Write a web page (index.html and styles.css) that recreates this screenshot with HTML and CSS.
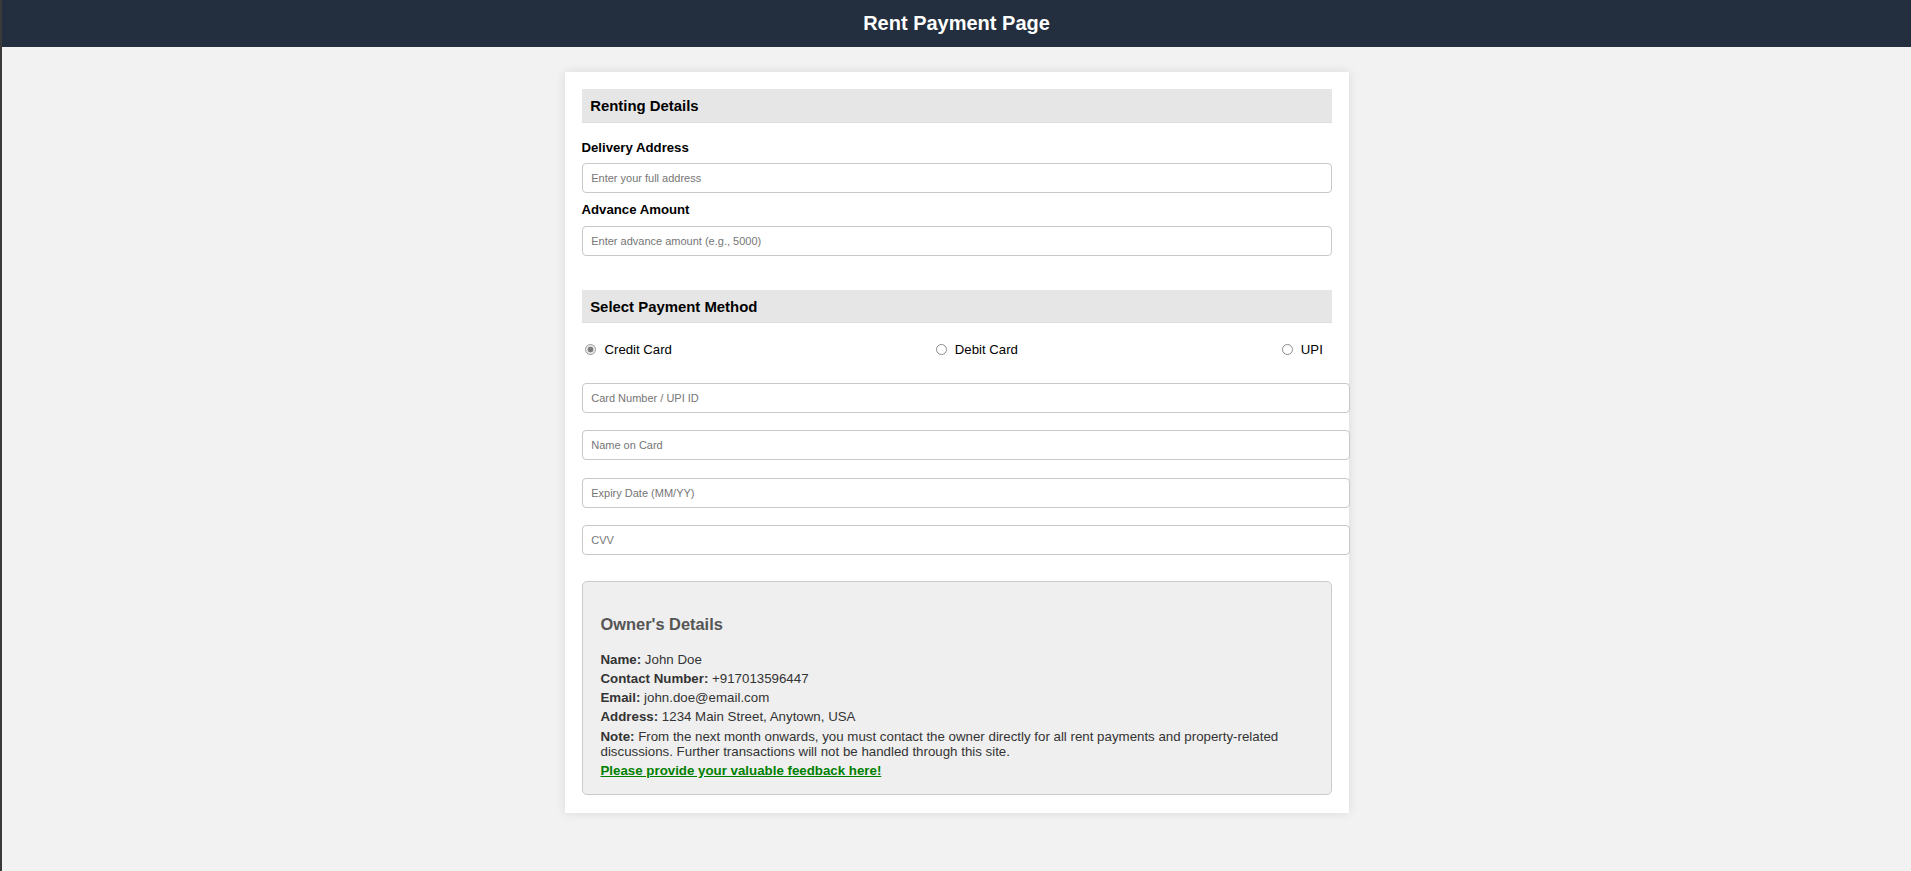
FILE: index.html
```html
<!DOCTYPE html>
<html lang="en">
<head>
<meta charset="utf-8">
<title>Rent Payment Page</title>
<link rel="stylesheet" href="styles.css">
</head>
<body>
<div class="page">
  <header class="topbar">
    <h1 class="topbar-title">Rent Payment Page</h1>
  </header>

  <main class="card">
    <section class="renting">
      <h3 class="section-title">Renting Details</h3>
      <label class="field-label" for="addr">Delivery Address</label>
      <input class="text-input" id="addr" type="text" placeholder="Enter your full address">
      <label class="field-label" for="adv">Advance Amount</label>
      <input class="text-input last" id="adv" type="text" placeholder="Enter advance amount (e.g., 5000)">
    </section>

    <section class="payment">
      <h3 class="section-title">Select Payment Method</h3>
      <div class="radio-row">
        <label class="radio-option"><input class="radio" type="radio" name="pm" checked><span>Credit Card</span></label>
        <label class="radio-option"><input class="radio" type="radio" name="pm"><span>Debit Card</span></label>
        <label class="radio-option"><input class="radio" type="radio" name="pm"><span>UPI</span></label>
      </div>
      <div class="pay-fields">
        <input class="pay-input" type="text" placeholder="Card Number / UPI ID">
        <input class="pay-input" type="text" placeholder="Name on Card">
        <input class="pay-input" type="text" placeholder="Expiry Date (MM/YY)">
        <input class="pay-input" type="text" placeholder="CVV">
      </div>
    </section>

    <section class="owner-box">
      <h3 class="owner-title">Owner's Details</h3>
      <p class="owner-line"><strong>Name:</strong> John Doe</p>
      <p class="owner-line"><strong>Contact Number:</strong> +917013596447</p>
      <p class="owner-line"><strong>Email:</strong> john.doe@email.com</p>
      <p class="owner-line"><strong>Address:</strong> 1234 Main Street, Anytown, USA</p>
      <p class="owner-line owner-note"><strong>Note:</strong> From the next month onwards, you must contact the owner directly for all rent payments and property-related discussions. Further transactions will not be handled through this site.</p>
      <a class="feedback-link" href="#">Please provide your valuable feedback here!</a>
    </section>
  </main>
</div>
</body>
</html>
```

FILE: styles.css
```css
html, body {
  margin: 0;
  padding: 0;
}

body {
  background: #f2f2f2;
  font-family: "Liberation Sans", Arial, sans-serif;
  color: #000;
}

.page {
  min-height: 100vh;
  border-left: 2px solid #3a3a3a;
  box-sizing: border-box;
}

.topbar {
  background: #232f3e;
  padding: 12px 0 12px;
  text-align: center;
}

.topbar-title {
  margin: 0;
  font-size: 20px;
  line-height: 23px;
  font-weight: bold;
  color: #fff;
}

.card {
  display: block;
  width: 784px;
  box-sizing: border-box;
  margin: 25px auto 0;
  padding: 17px 17px 18px;
  background: #fff;
  box-shadow: 0 0 10px rgba(0, 0, 0, 0.1);
}

.section-title {
  margin: 0;
  height: 33.7px;
  box-sizing: border-box;
  display: flex;
  align-items: center;
  padding: 1px 8.7px 0;
  background: #e6e6e6;
  border-bottom: 1px solid #dedede;
  font-size: 14.9px;
  font-weight: bold;
  color: #000;
}

.renting .section-title {
  margin-bottom: 17px;
}

.field-label {
  display: block;
  font-size: 13.2px;
  line-height: 15.2px;
  font-weight: bold;
  margin-bottom: 8.6px;
}

.text-input {
  display: block;
  width: 100%;
  box-sizing: border-box;
  height: 30px;
  padding: 0 8.7px;
  border: 1px solid #c8c8c8;
  border-radius: 4px;
  font-family: "Liberation Sans", Arial, sans-serif;
  font-size: 11px;
  color: #333;
  background: #fff;
  margin: 0 0 8.6px;
}

.text-input.last {
  margin-bottom: 0;
}

.text-input::placeholder,
.pay-input::placeholder {
  color: #767676;
}

.payment {
  margin-top: 33.8px;
}

.radio-row {
  display: flex;
  justify-content: space-between;
  align-items: center;
  margin-top: 18.7px;
  padding-right: 8.7px;
  font-size: 13.2px;
  line-height: 15.2px;
}

.radio-option {
  display: flex;
  align-items: center;
  gap: 8.3px;
}

.radio {
  appearance: none;
  -webkit-appearance: none;
  margin: 0 0 0 3.7px;
  width: 11px;
  height: 11px;
  box-sizing: border-box;
  border: 1px solid #8a8a8a;
  border-radius: 50%;
  background: #fff;
}

.radio:checked {
  border-color: #9a9a9a;
  background: radial-gradient(circle, #7b7b7b 0 2.6px, #e9e9e9 3.2px);
}

.pay-fields {
  display: flex;
  flex-direction: column;
  gap: 17.4px;
  margin-top: 25.6px;
}

.pay-input {
  display: block;
  width: calc(100% + 18px);
  box-sizing: border-box;
  height: 30px;
  padding: 0 8.7px;
  border: 1px solid #c8c8c8;
  border-radius: 4px;
  font-family: "Liberation Sans", Arial, sans-serif;
  font-size: 11px;
  color: #333;
  background: #fff;
  margin: 0;
}

.owner-box {
  margin-top: 26.2px;
  padding: 18px 18px 16.5px;
  background: #efefef;
  border: 1px solid #cbcbcb;
  border-radius: 5px;
  color: #333;
  font-size: 13.3px;
  line-height: 15px;
}

.owner-title {
  margin: 14.5px 0 18.1px;
  font-size: 16.4px;
  line-height: 19px;
  font-weight: bold;
  color: #555;
}

.owner-line {
  margin: 0 0 4.2px;
}

.owner-line strong {
  color: #333;
}

.owner-note {
  margin-bottom: 4px;
}

.feedback-link {
  display: inline-block;
  color: #008000;
  font-weight: bold;
  text-decoration: underline;
}
```
